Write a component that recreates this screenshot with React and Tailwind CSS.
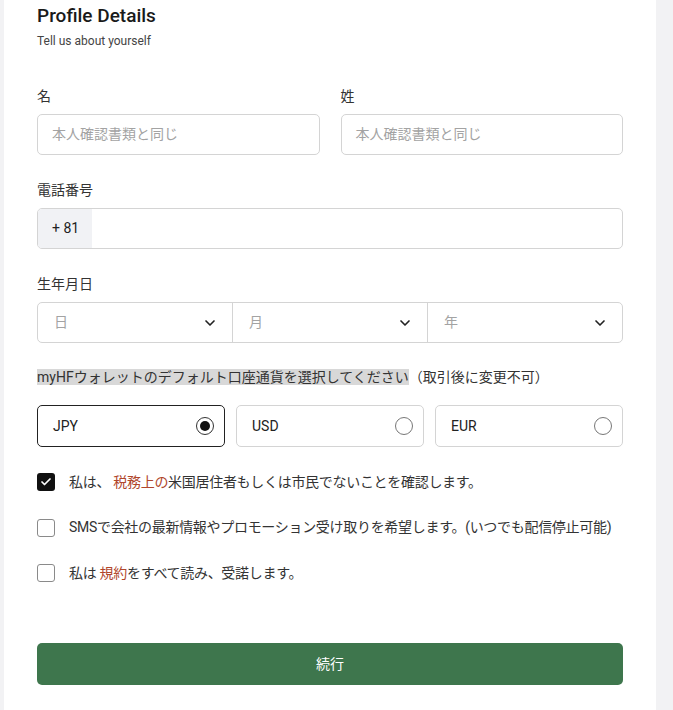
import { ChevronDown, Check } from 'lucide-react'

const font = { fontFamily: 'Roboto, "Noto Sans CJK JP", sans-serif' }

function Label({ children }) {
  return <div className="text-[14px] leading-5 text-[#333] mb-2">{children}</div>
}

function DateSelect({ placeholder, last }) {
  return (
    <div className={`flex-1 flex items-center justify-between pl-[16px] pr-[14px] ${last ? '' : 'border-r border-[#d4d4d4]'}`}>
      <span className="text-[14px] text-[#a3a3a3]">{placeholder}</span>
      <ChevronDown className="w-[16px] h-[16px] text-[#222]" strokeWidth={2.5} />
    </div>
  )
}

function Radio({ label, selected }) {
  return (
    <div className={`h-[42px] rounded-[5px] border flex items-center justify-between pl-[15px] pr-[10px] ${selected ? 'border-[#222]' : 'border-[#d4d4d4]'}`}>
      <span className="text-[14px] text-[#222]">{label}</span>
      {selected ? (
        <span className="w-[18px] h-[18px] rounded-full border border-[#333] flex items-center justify-center">
          <span className="w-[10px] h-[10px] rounded-full bg-[#111]" />
        </span>
      ) : (
        <span className="w-[18px] h-[18px] rounded-full border border-[#777]" />
      )}
    </div>
  )
}

function CheckRow({ checked, children }) {
  return (
    <div className="flex items-center gap-[14px] h-5">
      {checked ? (
        <span className="shrink-0 w-[18px] h-[18px] rounded-[3px] bg-[#111] flex items-center justify-center">
          <Check className="w-[12px] h-[12px] text-white" strokeWidth={3.5} />
        </span>
      ) : (
        <span className="shrink-0 w-[18px] h-[18px] rounded-[3px] border border-[#8a8a8a] bg-white" />
      )}
      <span className="text-[14px] text-[#333] whitespace-nowrap tracking-[-0.3px]">{children}</span>
    </div>
  )
}

export default function App() {
  return (
    <div className="min-h-[710px] bg-[#f2f2f4] flex pl-1 pr-[17px]" style={font}>
      <div className="flex-1 bg-white px-[33px] pt-1 pb-8">
        {/* Header */}
        <h1 className="text-[19px] leading-6 font-medium text-[#1a1a1a]">Profile Details</h1>
        <p className="text-[12px] leading-4 text-[#444] mt-[5px]">Tell us about yourself</p>

        {/* Name */}
        <div className="grid grid-cols-2 gap-[21px] mt-[37px]">
          <div>
            <Label>名</Label>
            <div className="h-[41px] rounded-[5px] border border-[#d4d4d4] flex items-center px-[14px] text-[14px] text-[#a3a3a3]">本人確認書類と同じ</div>
          </div>
          <div>
            <Label>姓</Label>
            <div className="h-[41px] rounded-[5px] border border-[#d4d4d4] flex items-center px-[14px] text-[14px] text-[#a3a3a3]">本人確認書類と同じ</div>
          </div>
        </div>

        {/* Phone */}
        <div className="mt-[25px]">
          <Label>電話番号</Label>
          <div className="h-[41px] rounded-[5px] border border-[#d4d4d4] flex overflow-hidden">
            <div className="w-[54px] bg-[#f1f2f5] flex items-center pl-[14px] text-[14px] text-[#222]">+ 81</div>
            <div className="flex-1" />
          </div>
        </div>

        {/* Birthday */}
        <div className="mt-[25px]">
          <Label>生年月日</Label>
          <div className="h-[41px] rounded-[5px] border border-[#d4d4d4] flex">
            <DateSelect placeholder="日" />
            <DateSelect placeholder="月" />
            <DateSelect placeholder="年" last />
          </div>
        </div>

        {/* Currency */}
        <div className="mt-[24px]">
          <div className="text-[14px] leading-5 text-[#333]">
            <span className="bg-[#d8d8d8]">myHFウォレットのデフォルト口座通貨を選択してください</span>
            <span>（取引後に変更不可）</span>
          </div>
          <div className="grid grid-cols-3 gap-[11px] mt-[18px]">
            <Radio label="JPY" selected />
            <Radio label="USD" />
            <Radio label="EUR" />
          </div>
        </div>

        {/* Checkboxes */}
        <div className="mt-[25px] flex flex-col gap-[25.5px]">
          <CheckRow checked>
            私は、 <span className="text-[#b0462b]">税務上の</span>米国居住者もしくは市民でないことを確認します。
          </CheckRow>
          <CheckRow>SMSで会社の最新情報やプロモーション受け取りを希望します。(いつでも配信停止可能)</CheckRow>
          <CheckRow>
            私は <span className="text-[#b0462b]">規約</span>をすべて読み、受諾します。
          </CheckRow>
        </div>

        <button className="mt-[60px] w-full h-[42px] rounded-[5px] bg-[#3e764d] text-white text-[14px]">続行</button>
      </div>
    </div>
  )
}
